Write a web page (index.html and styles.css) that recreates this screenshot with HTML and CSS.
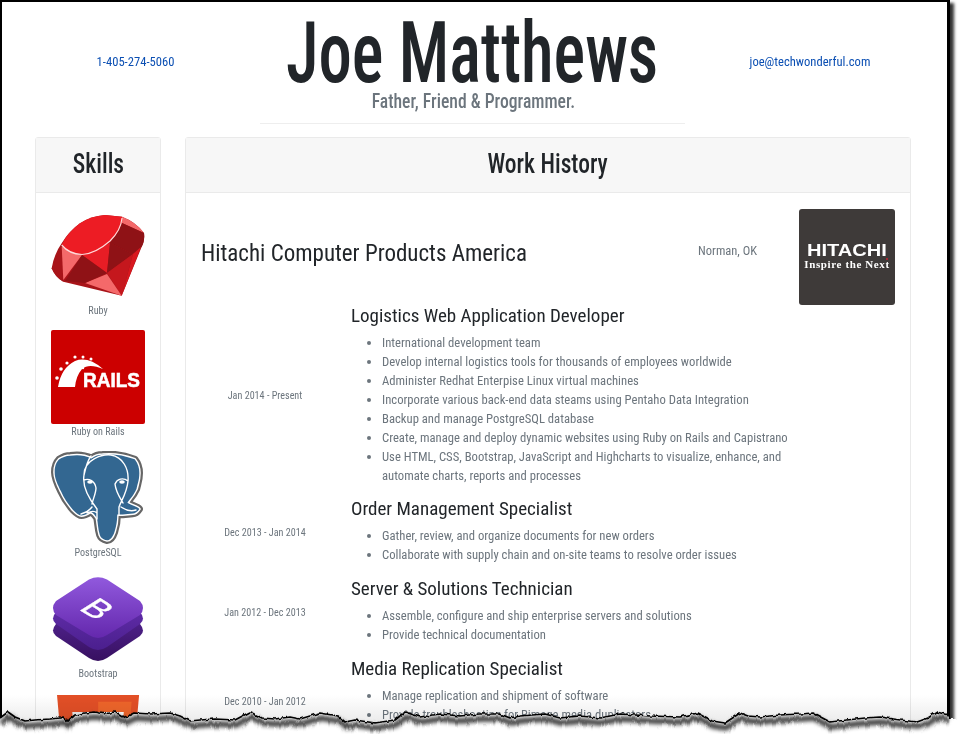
FILE: index.html
```html
<!DOCTYPE html>
<html lang="en">
<head>
<meta charset="utf-8">
<title>Joe Matthews</title>
<link rel="stylesheet" href="styles.css">
</head>
<body>
<div class="shot">
  <div class="window">
    <header class="masthead">
      <a class="contact" href="#">1-405-274-5060</a>
      <div class="identity">
        <h1 class="name"><span>Joe Matthews</span></h1>
        <p class="tagline"><span>Father, Friend &amp; Programmer.</span></p>
      </div>
      <a class="contact" href="#">joe@techwonderful.com</a>
    </header>
    <main class="columns">
      <aside class="card">
        <h2 class="card-head"><span>Skills</span></h2>
        <div class="skill-list">
          <div class="skill">
            <svg class="skill-icon" viewBox="0 0 94 94">
              <path fill="#a81419" d="M54 6L71 7.7Q85 13 93 24Q94 32 90.7 37.7L70.7 86.7L12.3 72.7Q4 68 .7 59.3Q3 45 10.7 34.3Q18 22 29 14.3Q40 7 54 6Z"/>
              <path fill="#f4696a" d="M71 7.700Q85 13 93 24L71 14Z"/>
              <path fill="#8f1216" d="M71 14L93 24Q94 32 90.7 37.7L82 45L59 34Z"/>
              <path fill="#a81419" d="M10.7 37.6L.7 59.3Q4 68 12.3 72.7Z"/>
              <path fill="#f4696a" d="M10.7 37.6L31 46L12.3 71Z"/>
              <path fill="#e81d25" d="M31 46L59 34L56 64Z"/>
              <path fill="#8f1216" d="M59 34L82 45L56 64Z"/>
              <path fill="#d8181f" d="M82 45L90 38L70.7 86.7Z"/>
              <path fill="#c5171d" d="M56 64L82 45L70.7 86.7Z"/>
              <path fill="#f4696a" d="M34 74L56 65L70.7 86.7Z"/>
              <path fill="#8f1216" d="M31 46L56 64L34 74L14 72Z"/>
              <path fill="#ed1c24" d="M10.7 36Q16 24 29 14.3Q40 7 54 6L71 7.7Q72 19 59 32Q44 44 31 45Q18 45 10.7 36Z"/>
              <path fill="none" stroke="#ffd9d9" stroke-width="1.2" d="M10.7 36Q18 45 31 45.5Q44 45 59 32Q70 21 71 9"/>
            </svg>
            <span class="skill-name">Ruby</span>
          </div>
          <div class="skill">
            <svg class="skill-icon" viewBox="0 0 94 94">
              <rect width="94" height="94" rx="2" fill="#c00"/>
              <path fill="#fff" d="M7 57Q10 38 24 31Q37 26 52 39Q38 33 31 39Q25 46 24 57Z"/>
              <g fill="#fff">
                <circle cx="6" cy="48" r="1.8"/><circle cx="10" cy="39" r="1.8"/><circle cx="16" cy="33" r="1.6"/>
                <circle cx="24" cy="27" r="1.6"/><circle cx="32" cy="27" r="1.5"/><circle cx="40" cy="29" r="1.5"/>
                <circle cx="26" cy="37" r="1.2"/><circle cx="32" cy="38" r="1.2"/><circle cx="25" cy="44" r="1.2"/>
              </g>
              <text class="rails-word" x="32" y="57" textLength="57" lengthAdjust="spacingAndGlyphs">RAILS</text>
            </svg>
            <span class="skill-name">Ruby on Rails</span>
          </div>
          <div class="skill">
            <svg class="skill-icon" viewBox="0 0 94 94">
              <defs>
                <path id="pg-body" d="M17 1C24 0 32 0 40 4C44 1 48 0 52 0C62 -1 74 0 87 5C91 10 92 15 92 20C92 28 90 32 89 37C86 44 82 48 79 52C82 55 90 56 92 59C90 62 87 64 85 64L74 65L68 65C68 72 67 78 65 84C63 90 60 93 57 93C52 92 50 90 49 87C47 80 47 74 46 69C44 66 42 63 39 62C36 64 33 66 29 66C26 66 23 63 20 60C14 53 10 47 7 40C3 32 0 26 0 19C0 12 2 8 5 5C8 3 12 1 17 1Z"/>
              </defs>
              <g transform="translate(46 46.500) scale(.92) translate(-46 -46.500)">
                <use class="pg-rim" href="#pg-body"/>
                <use class="pg-ring" href="#pg-body"/>
                <use class="pg-fill" href="#pg-body"/>
              </g>
              <path class="pg-line" d="M33 24C33 8 52 3 60 4C72 6 78 18 77 30C76 42 70 50 68 56V64M33 24C31 36 38 48 46 58V68M33 29C38 27 44 30 45 37C45 42 42 48 41 53M64 33C66 28 72 26 77 30M64 33C65 42 70 48 72 52M41 56C38 60 34 62 30 63M36 62C40 60 44 60 46 62M70 56C76 60 82 60 85 59M40 5C37 9 35 15 33 24"/>
              <ellipse cx="39" cy="31" rx="2.800" ry="1.800" fill="#fff"/>
              <ellipse cx="71" cy="31" rx="2.800" ry="1.800" fill="#fff"/>
            </svg>
            <span class="skill-name">PostgreSQL</span>
          </div>
          <div class="skill">
            <svg class="skill-icon" viewBox="0 0 94 94">
              <defs>
                <linearGradient id="bs-top" x1="0" y1="0" x2="0" y2="1"><stop offset="0" stop-color="#9159dd"/><stop offset="1" stop-color="#6428ad"/></linearGradient>
                <linearGradient id="bs-mid" x1="0" y1="0" x2="0" y2="1"><stop offset="0" stop-color="#6a33b4"/><stop offset="1" stop-color="#4b1f8e"/></linearGradient>
                <linearGradient id="bs-low" x1="0" y1="0" x2="0" y2="1"><stop offset="0" stop-color="#5a2aa0"/><stop offset="1" stop-color="#371060"/></linearGradient>
              </defs>
              <path fill="url(#bs-low)" d="M40 30Q47 26 54 30L89 52Q95 59 89 64L56 86Q47 92 38 86L5 64Q-1 59 5 52Z"/>
              <path fill="url(#bs-mid)" d="M40 18Q47 14 54 18L89 40Q95 47 89 52L56 75Q47 81 38 75L5 52Q-1 47 5 40Z"/>
              <path fill="url(#bs-top)" d="M38 7.500Q47 3 56 7.500L89 29Q95 36 89 43L56 63Q47 69 38 63L5 43Q-1 36 5 29Z"/>
              <text class="bs-letter" transform="matrix(.8 .5 -.8 .5 36.600 43)" text-anchor="middle">B</text>
            </svg>
            <span class="skill-name">Bootstrap</span>
          </div>
          <div class="skill">
            <svg class="skill-icon" viewBox="0 0 94 94">
              <g transform="translate(.55 2) scale(.182)">
                <path fill="#e34f26" d="M71 460L30 0H481L440 460L255 512Z"/>
                <path fill="#ef652a" d="M256 472L405 431L440 37H256Z"/>
                <path fill="#ebebeb" d="M256 208H181L176 150H256V94H114L115 109L129 265H256ZM256 355L192 338L188 293H132L139 382L255 414H256Z"/>
                <path fill="#fff" d="M255 208V265H325L318 338L255 355V414L371 382L387 208ZM255 94V150H392L397 94Z"/>
              </g>
            </svg>
          </div>
        </div>
      </aside>
      <section class="card">
        <h2 class="card-head"><span>Work History</span></h2>
        <div class="history-body">
          <div class="job-head">
            <h3 class="company">Hitachi Computer Products America</h3>
            <span class="place">Norman, OK</span>
            <div class="logo">
              <span class="logo-word">HITACHI</span>
              <span class="logo-line">Inspire the Next</span>
            </div>
          </div>
          <div class="role">
            <div class="dates">Jan 2014 - Present</div>
            <div class="role-body">
              <h4 class="role-title">Logistics Web Application Developer</h4>
              <ul class="duties">
                <li>International development team</li>
                <li>Develop internal logistics tools for thousands of employees worldwide</li>
                <li>Administer Redhat Enterpise Linux virtual machines</li>
                <li>Incorporate various back-end data steams using Pentaho Data Integration</li>
                <li>Backup and manage PostgreSQL database</li>
                <li>Create, manage and deploy dynamic websites using Ruby on Rails and Capistrano</li>
                <li>Use HTML, CSS, Bootstrap, JavaScript and Highcharts to visualize, enhance, and automate charts, reports and processes</li>
              </ul>
            </div>
          </div>
          <div class="role">
            <div class="dates">Dec 2013 - Jan 2014</div>
            <div class="role-body">
              <h4 class="role-title">Order Management Specialist</h4>
              <ul class="duties">
                <li>Gather, review, and organize documents for new orders</li>
                <li>Collaborate with supply chain and on-site teams to resolve order issues</li>
              </ul>
            </div>
          </div>
          <div class="role">
            <div class="dates">Jan 2012 - Dec 2013</div>
            <div class="role-body">
              <h4 class="role-title">Server &amp; Solutions Technician</h4>
              <ul class="duties">
                <li>Assemble, configure and ship enterprise servers and solutions</li>
                <li>Provide technical documentation</li>
              </ul>
            </div>
          </div>
          <div class="role">
            <div class="dates">Dec 2010 - Jan 2012</div>
            <div class="role-body">
              <h4 class="role-title">Media Replication Specialist</h4>
              <ul class="duties duties-cut">
                <li>Manage replication and shipment of software</li>
                <li>Provide troubleshooting for Rimage media duplicators</li>
              </ul>
            </div>
          </div>
        </div>
      </section>
    </main>
  </div>
  <div class="fade"></div>
  <svg class="tear" viewBox="0 0 959 734" width="959" height="734">
    <defs>
      <filter id="soft" filterUnits="userSpaceOnUse" x="-10" y="690" width="980" height="50"><feGaussianBlur stdDeviation="2"/></filter>
      <filter id="rough" filterUnits="userSpaceOnUse" x="-10" y="690" width="980" height="50">
        <feTurbulence type="fractalNoise" baseFrequency=".22 .05" numOctaves="2" seed="4"/>
        <feDisplacementMap in="SourceGraphic" scale="4" yChannelSelector="R" xChannelSelector="G"/>
      </filter>
      <path id="edge" d="M0 718L8 712L15 717L25 721L35 720L50 719L60 718L63 717L68 721L75 715L85 713L95 712L105 714L115 712L125 718L135 713L150 714L170 713L180 716L190 721L200 720L215 719L235 720L250 712L262 718L275 719L290 717L300 719L320 713L338 716L345 722L355 720L375 723L395 720L405 712L420 717L440 714L460 716L480 714L500 714L510 718L520 716L545 714L560 718L580 716L600 718L620 714L650 716L680 717L697 713L712 721L725 723L740 713L748 716L760 717L780 715L800 714L813 713L830 722L847 720L865 718L880 717L900 720L917 722L928 718L937 712L948 715"/>
    </defs>
    <g filter="url(#rough)">
      <path class="tear-paper" d="M0 718L8 712L15 717L25 721L35 720L50 719L60 718L63 717L68 721L75 715L85 713L95 712L105 714L115 712L125 718L135 713L150 714L170 713L180 716L190 721L200 720L215 719L235 720L250 712L262 718L275 719L290 717L300 719L320 713L338 716L345 722L355 720L375 723L395 720L405 712L420 717L440 714L460 716L480 714L500 714L510 718L520 716L545 714L560 718L580 716L600 718L620 714L650 716L680 717L697 713L712 721L725 723L740 713L748 716L760 717L780 715L800 714L813 713L830 722L847 720L865 718L880 717L900 720L917 722L928 718L937 712L948 715L949 719L965 719V740H-5V718Z"/>
      <use class="tear-shadow" href="#edge" transform="translate(1 5)" filter="url(#soft)"/>
      <use class="tear-line" href="#edge"/>
    </g>
  </svg>
</div>
</body>
</html>
```
FILE: styles.css
```css
html,body{margin:0;padding:0;background:#fff}
body{font-family:Roboto,sans-serif;font-stretch:75%;color:#6c757d;font-size:12.67px;line-height:18.9px}
h1,h2,h3,h4,p,ul{margin:0;padding:0;font-weight:400}
.shot{width:959px;height:734px;overflow:hidden;position:relative}
.window{box-sizing:border-box;width:950px;height:722px;border:solid #000;border-width:2px 3px 0 2px;overflow:hidden;box-shadow:4px 3px 3px rgba(0,0,0,.8);margin-bottom:20px}

.masthead{display:grid;grid-template-columns:201px 473px 202px;padding:11.6px 0 0 33px}
.contact{color:#0b4fb3;text-decoration:none;text-align:center;padding-top:41.4px;height:14px;line-height:14px;font-size:12.6px}
.identity{display:flex;flex-direction:column;align-items:center;margin:0 24px;border-bottom:1px solid #eee;padding-bottom:10.4px}
.name{display:flex;justify-content:center;width:100%;white-space:nowrap;font-size:86px;line-height:75px;font-weight:500;color:#212529}
.name span{display:inline-block;transform:scaleX(.775) translateY(.5px)}
.tagline{font-size:21px;line-height:24px;white-space:nowrap;font-weight:500}
.tagline span{display:inline-block;transform:scaleX(.84) translateX(1.5px)}

.columns{display:grid;grid-template-columns:126px 726px;gap:24px;padding:13px 0 0 33px}
.card{border:1px solid #eaeaea;border-radius:3px}
.card-head{height:55px;line-height:52px;background:#f7f7f7;border-bottom:1px solid #eaeaea;text-align:center;font-size:28px;font-weight:500;color:#212529;white-space:nowrap;box-sizing:border-box}
.card-head span{display:inline-block;transform:scaleX(.84)}

.skill-list{display:flex;flex-direction:column;align-items:center;padding-top:16px;gap:12px}
.skill{display:flex;flex-direction:column;align-items:center}
.skill-icon{display:block;width:94px;height:94px}
.skill-name{font-size:10.1px;line-height:14px;padding-top:1px}
.skill:last-child{height:94px}
.pg-rim{fill:none;stroke:#666;stroke-width:8;stroke-linejoin:round}
.pg-ring{fill:none;stroke:#fff;stroke-width:3.2;stroke-linejoin:round}
.pg-fill{fill:#336791}
.pg-line{fill:none;stroke:#fff;stroke-width:1.4;stroke-linecap:round}
.rails-word{font-family:"Liberation Sans",sans-serif;font-weight:700;font-size:21px;fill:#fff;stroke:#fff;stroke-width:.6}
.bs-letter{font-family:"Liberation Sans",sans-serif;font-weight:400;font-size:36px;fill:#fff;stroke:#fff;stroke-width:.4}

.history-body{padding:16px 15px 0}
.job-head{display:grid;grid-template-columns:1fr auto 96px;align-items:center;height:96px}
.company{font-size:23px;line-height:29px;color:#212529;margin-top:-6px}
.place{margin-right:42px;font-size:12.5px;margin-top:-11px}
.logo{position:relative;width:96px;height:96px;box-sizing:border-box;background:#3e3a39;border-radius:3px;color:#fff;display:flex;flex-direction:column;align-items:center;padding-top:33px}
.logo::after{content:"";position:absolute;left:87px;top:49.5px;width:2px;height:2px;border-radius:50%;background:#c8202f}
.logo-word{font-family:"Liberation Sans",sans-serif;font-weight:700;font-size:17px;line-height:17px;font-stretch:100%;transform:scaleX(1.18)}
.logo-line{font-family:"Liberation Serif",serif;font-weight:700;font-size:11px;line-height:11px;letter-spacing:.62px;white-space:nowrap;font-stretch:100%}

.role{display:grid;grid-template-columns:128px 470px;gap:22px;align-items:center;margin-bottom:11.8px}
.job-head + .role{margin-top:-1px}
.dates{text-align:center;font-size:10.1px;padding-top:4px}
.role-title{font-size:19px;line-height:24px;color:#212529;margin-bottom:6.2px}
.duties{padding-left:31px}
.duties-cut{padding-bottom:19px}

.fade{position:absolute;left:2px;top:695px;width:945px;height:27px;background:linear-gradient(#fff,#ebebeb);mix-blend-mode:multiply;pointer-events:none}
.tear{position:absolute;left:0;top:0;pointer-events:none}
.tear-paper{fill:#fff}
.tear-shadow{fill:none;stroke:rgba(0,0,0,.85);stroke-width:5}
.tear-line{fill:none;stroke:#000;stroke-width:1.7;stroke-linejoin:round}
```
